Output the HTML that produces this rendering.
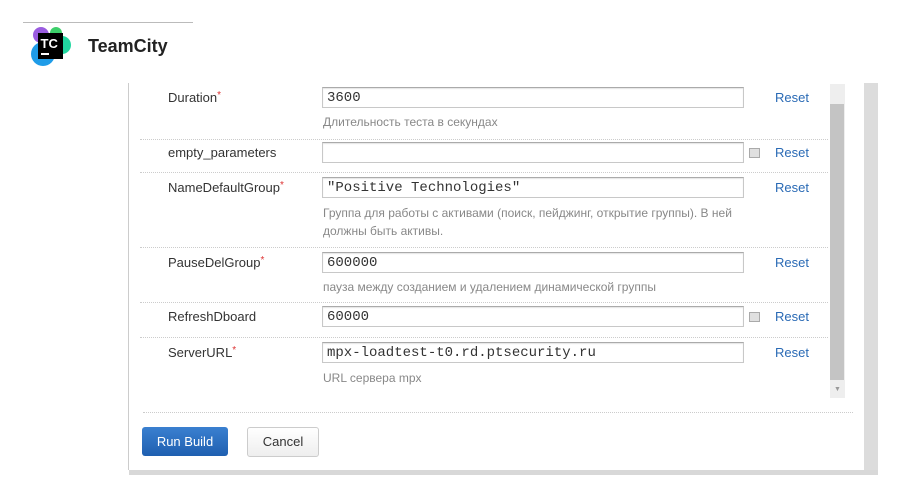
<!DOCTYPE html>
<html><head><meta charset="utf-8"><style>
body{margin:0;width:897px;height:490px;background:#fff;position:relative;overflow:hidden;font-family:"Liberation Sans",Arial,sans-serif;}
.abs{position:absolute}
.lbl{position:absolute;left:168px;font-size:13px;color:#333}
.lbl i{color:#d33;font-style:normal;font-size:10px;vertical-align:top}
.inp{position:absolute;left:322px;border:1px solid #c8c8c8;border-top-color:#aaa;box-shadow:inset 0 1px 1px #e4e4e4;font-family:"Liberation Mono",monospace;font-size:14px;line-height:21px;padding-left:4px;box-sizing:border-box;width:422px;height:21px;color:#333}
.desc{position:absolute;left:323px;font-size:12px;color:#888;line-height:18px}
.rst{position:absolute;left:775px;font-size:13px;color:#2a6ab5}
.sep{position:absolute;left:140px;width:688px;border-top:1px dotted #ccc}
.ic{position:absolute;left:749px;width:9px;height:8px;border:1px solid #aaa;background:#e0e0e0}
</style></head><body>
<div class="abs" style="left:23px;top:22px;width:170px;height:1px;background:#bbb"></div>
<svg class="abs" style="left:28px;top:24px" width="46" height="46" viewBox="0 0 46 46">
<circle cx="13" cy="11" r="8" fill="#9a5ce0"/><circle cx="28" cy="9" r="6" fill="#3ccf6a"/><circle cx="34" cy="21" r="9" fill="#21d7a0"/><circle cx="15" cy="30" r="12" fill="#1f9ce8"/>
<rect x="10" y="9" width="25" height="26" fill="#000"/>
<text x="12.5" y="24" font-family="Liberation Sans" font-weight="bold" font-size="13" fill="#fff">TC</text>
<rect x="13" y="29" width="8" height="2" fill="#fff"/></svg>
<div class="abs" style="left:88px;top:36px;font-size:18px;font-weight:bold;color:#222">TeamCity</div>
<div class="abs" style="left:864px;top:83px;width:14px;height:392px;background:#dcdcdc"></div>
<div class="abs" style="left:129px;top:470px;width:749px;height:5px;background:#d8d8d8"></div>
<div class="abs" style="left:128px;top:83px;width:1px;height:387px;background:#ccc"></div>
<div class="abs" style="left:830px;top:84px;width:15px;height:314px;background:#eee"></div>
<div class="abs" style="left:830px;top:104px;width:14px;height:276px;background:#c4c4c4"></div>
<div class="abs" style="left:834px;top:386px;font-size:7px;color:#999">▼</div>

<div class="lbl" style="top:90px">Duration<i>*</i></div>
<div class="inp" style="top:87px">3600</div>
<div class="desc" style="top:113px">Длительность теста в секундах</div>
<div class="rst" style="top:90px">Reset</div>
<div class="sep" style="top:139px"></div>

<div class="lbl" style="top:145px">empty_parameters</div>
<div class="inp" style="top:142px"></div>
<div class="ic" style="top:148px"></div>
<div class="rst" style="top:145px">Reset</div>
<div class="sep" style="top:172px"></div>

<div class="lbl" style="top:180px">NameDefaultGroup<i>*</i></div>
<div class="inp" style="top:177px">"Positive Technologies"</div>
<div class="desc" style="top:204px">Группа для работы с активами (поиск, пейджинг, открытие группы). В ней<br>должны быть активы.</div>
<div class="rst" style="top:180px">Reset</div>
<div class="sep" style="top:247px"></div>

<div class="lbl" style="top:255px">PauseDelGroup<i>*</i></div>
<div class="inp" style="top:252px">600000</div>
<div class="desc" style="top:278px">пауза между созданием и удалением динамической группы</div>
<div class="rst" style="top:255px">Reset</div>
<div class="sep" style="top:302px"></div>

<div class="lbl" style="top:309px">RefreshDboard</div>
<div class="inp" style="top:306px">60000</div>
<div class="ic" style="top:312px"></div>
<div class="rst" style="top:309px">Reset</div>
<div class="sep" style="top:337px"></div>

<div class="lbl" style="top:345px">ServerURL<i>*</i></div>
<div class="inp" style="top:342px">mpx-loadtest-t0.rd.ptsecurity.ru</div>
<div class="desc" style="top:369px">URL сервера mpx</div>
<div class="rst" style="top:345px">Reset</div>

<div class="abs" style="left:143px;top:412px;width:710px;border-top:1px dotted #ccc"></div>
<div class="abs" style="left:142px;top:427px;width:86px;height:29px;border-radius:3px;background:linear-gradient(#3a80d0,#1f5fb0);color:#fff;font-size:13px;text-align:center;line-height:29px">Run Build</div>
<div class="abs" style="left:247px;top:427px;width:70px;height:28px;border-radius:3px;border:1px solid #ccc;background:linear-gradient(#fff,#eee);color:#333;font-size:13px;text-align:center;line-height:28px">Cancel</div>
</body></html>
